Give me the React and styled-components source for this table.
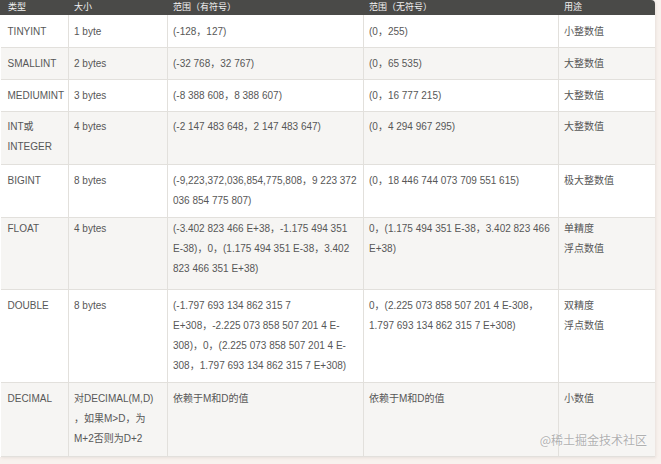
import React from "react";
import styled, { createGlobalStyle } from "styled-components";

const GlobalStyle = createGlobalStyle`
  html, body {
    margin: 0;
    padding: 0;
    background: #f8f2ee;
  }
  body {
    font-family: "Liberation Sans", "Noto Sans CJK SC", sans-serif;
  }
`;

const Page = styled.div`
  position: relative;
  width: 661px;
  height: 464px;
  overflow: hidden;
`;

const Frame = styled.div`
  width: 655px;
  background: #fff;
  border-top-right-radius: 4px;
  box-shadow: 1px 1px 3px rgba(120, 100, 90, 0.12);
  overflow: hidden;
`;

const Table = styled.table`
  width: 655px;
  table-layout: fixed;
  border-collapse: collapse;
  font-size: 10px;
  color: #575757;
`;

const HeadCell = styled.th`
  height: 15px;
  padding: 0 5px;
  padding-left: ${(p) => (p.first ? "7px" : "5px")};
  background: #4a4a48;
  color: #f2f2f2;
  font-size: 9px;
  font-weight: normal;
  text-align: left;
  line-height: 14px;
  vertical-align: top;
  border-left: 1px solid #4a4a48;
`;

const Row = styled.tr`
  background: ${(p) => (p.shaded ? "#f6f5f3" : "#ffffff")};
  border-bottom: 1px solid #e2e0dc;
`;

const Cell = styled.td`
  padding: ${(p) => `${p.top}px 5px ${p.bottom}px`};
  padding-left: ${(p) => (p.first ? "7px" : "5px")};
  line-height: 20px;
  vertical-align: top;
  white-space: nowrap;
  border-left: ${(p) => (p.first ? "none" : "1px solid #e2e0dc")};
`;

const Line = styled.div`
  white-space: nowrap;
`;

const Watermark = styled.div`
  position: absolute;
  right: 14px;
  top: 432px;
  font-size: 12px;
  line-height: 16px;
  color: #b0b0b0;
  text-shadow: 0 0 2px #fff, 0 0 1px #fff;
  font-family: "Noto Sans CJK SC", sans-serif;
`;

const widths = [68, 99, 196, 195, 97];
const headers = ["类型", "大小", "范围（有符号）", "范围（无符号）", "用途"];

// pad: [top, bottom] per row
const rows = [
  {
    pad: [7, 5],
    cells: [["TINYINT"], ["1 byte"], ["(-128，127)"], ["(0，255)"], ["小整数值"]],
  },
  {
    pad: [6, 5],
    cells: [["SMALLINT"], ["2 bytes"], ["(-32 768，32 767)"], ["(0，65 535)"], ["大整数值"]],
  },
  {
    pad: [6, 5],
    cells: [["MEDIUMINT"], ["3 bytes"], ["(-8 388 608，8 388 607)"], ["(0，16 777 215)"], ["大整数值"]],
  },
  {
    pad: [5, 7],
    cells: [["INT或", "INTEGER"], ["4 bytes"], ["(-2 147 483 648，2 147 483 647)"], ["(0，4 294 967 295)"], ["大整数值"]],
  },
  {
    pad: [6, 6],
    cells: [
      ["BIGINT"],
      ["8 bytes"],
      ["(-9,223,372,036,854,775,808，9 223 372", "036 854 775 807)"],
      ["(0，18 446 744 073 709 551 615)"],
      ["极大整数值"],
    ],
  },
  {
    pad: [1, 10],
    cells: [
      ["FLOAT"],
      ["4 bytes"],
      ["(-3.402 823 466 E+38，-1.175 494 351", "E-38)，0，(1.175 494 351 E-38，3.402", "823 466 351 E+38)"],
      ["0，(1.175 494 351 E-38，3.402 823 466", "E+38)"],
      ["单精度", "浮点数值"],
    ],
  },
  {
    pad: [6, 6],
    cells: [
      ["DOUBLE"],
      ["8 bytes"],
      [
        "(-1.797 693 134 862 315 7",
        "E+308，-2.225 073 858 507 201 4 E-",
        "308)，0，(2.225 073 858 507 201 4 E-",
        "308，1.797 693 134 862 315 7 E+308)",
      ],
      ["0，(2.225 073 858 507 201 4 E-308，", "1.797 693 134 862 315 7 E+308)"],
      ["双精度", "浮点数值"],
    ],
  },
  {
    pad: [6, 7],
    cells: [
      ["DECIMAL"],
      ["对DECIMAL(M,D)", "，如果M>D，为", "M+2否则为D+2"],
      ["依赖于M和D的值"],
      ["依赖于M和D的值"],
      ["小数值"],
    ],
  },
];

export default function App() {
  return (
    <Page>
      <GlobalStyle />
      <Frame>
        <Table>
          <colgroup>
            {widths.map((w, i) => (
              <col key={i} style={{ width: w }} />
            ))}
          </colgroup>
          <thead>
            <tr>
              {headers.map((h, i) => (
                <HeadCell key={h} first={i === 0}>
                  {h}
                </HeadCell>
              ))}
            </tr>
          </thead>
          <tbody>
            {rows.map((row, r) => (
              <Row key={r} shaded={r % 2 === 1}>
                {row.cells.map((lines, c) => (
                  <Cell key={c} first={c === 0} top={row.pad[0]} bottom={row.pad[1]}>
                    {lines.map((l, k) => (
                      <Line key={k}>{l}</Line>
                    ))}
                  </Cell>
                ))}
              </Row>
            ))}
          </tbody>
        </Table>
      </Frame>
      <Watermark>@稀土掘金技术社区</Watermark>
    </Page>
  );
}
